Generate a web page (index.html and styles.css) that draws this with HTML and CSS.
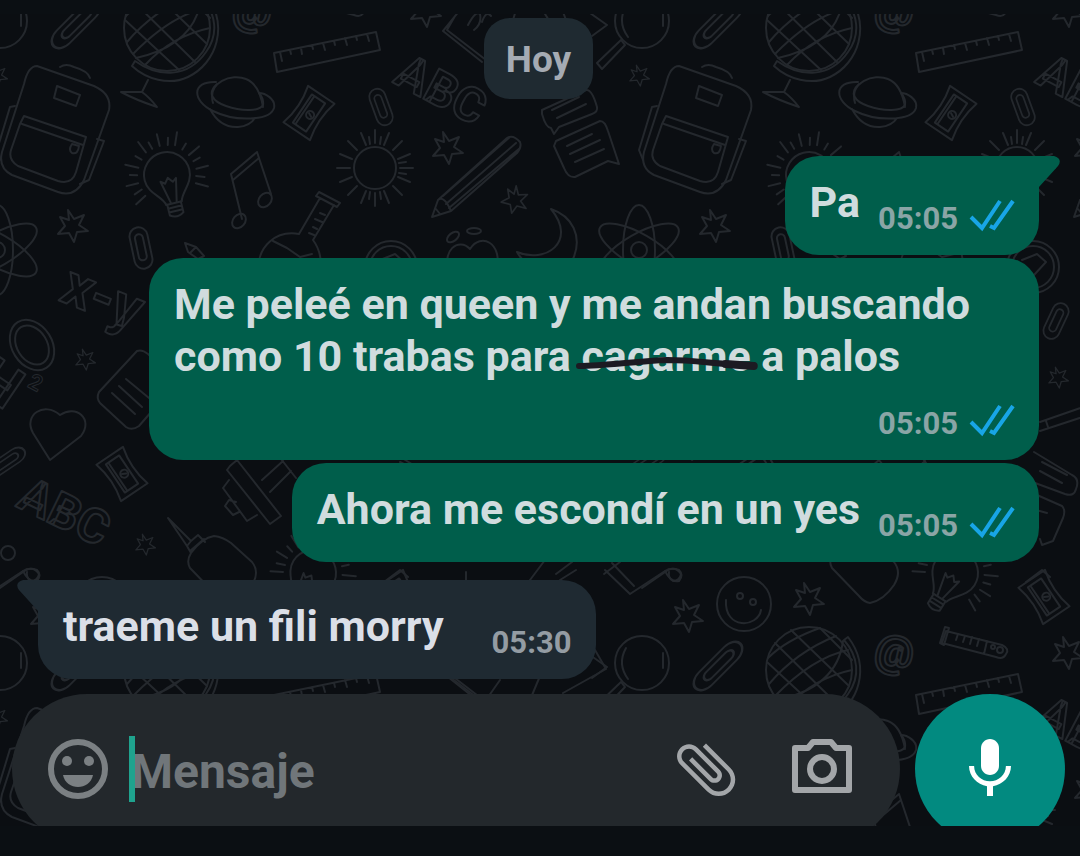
FILE: index.html
```html
<!DOCTYPE html>
<html lang="es">

<head>
    <meta charset="UTF-8">
    <meta name="viewport" content="width=device-width, initial-scale=1">
    <title>Chat</title>
    <link rel="stylesheet" href="styles.css">
</head>

<body>
    <div class="chat">
        <!-- wallpaper: one 642x642 tile, repeated -->
        <svg class="wallpaper" aria-hidden="true">
            <defs>
                <path id="star" d="M-4 -15 L2 -6 L12 -10 L7 0 L16 6 L5 7 L2 17 L-3 8 L-14 9 L-7 1 L-12 -8 L-3 -5z" />
                <g id="clip">
                    <path d="M-9 -12 A9 9 0 0 1 9 -12 V12 A9 9 0 0 1 -9 12z" />
                    <path d="M-4 8 V-10 A4 4 0 0 1 4 -10 V9 A4 4 0 0 1 -4 8" />
                </g>
                <g id="sharpener">
                    <path d="M-16 -22 H16 Q10 0 16 22 H-16 Q-10 0 -16 -22z" />
                    <path d="M-8 -17 H8 V17 H-8z M-5 -17 V17" />
                    <circle cx="2" cy="1" r="4" />
                    <path d="M0 0 L4 2" />
                </g>
                <g id="bulb">
                    <path d="M-8 29 C-9 20 -23 14 -23 0 A23 23 0 0 1 23 0 C23 14 10 20 8 29z" />
                    <path d="M-3 28 L-8 5 L-4 8 L0 3 L4 8 L8 5 L3 28 M-7 29 V40 Q0 45 7 40 V29 M-7 33 H7 M-7 37 H7" />
                    <path d="M0 -30 V-42 M8 -29 L10 -36 M15 -27 L20 -39 M21 -21 L26 -26 M26 -14 L38 -20 M29 -7 L36 -9 M30 1 H42 M28 8 L36 11 M26 15 L37 21 M-8 -29 L-10 -36 M-15 -27 L-20 -39 M-21 -21 L-26 -26 M-26 -14 L-38 -20 M-29 -7 L-36 -9 M-30 1 H-42 M-28 8 L-36 11 M-26 15 L-37 21" />
                </g>
                <g id="tile">
                    <!-- first rows -->
                    <g>
                        <circle cx="642" cy="21" r="27" />
                        <path d="M626 6 Q617 22 628 37 M663 11 V26 M621 40 L625 45 L602 69 L597 63z" />
                    </g>
                    <use href="#clip" transform="translate(76 24) rotate(45) scale(1 1.5)" />
                    <g>
                        <circle cx="167" cy="28" r="43" />
                        <path d="M206 -5 C229 25 217 63 188 77 C169 86 146 79 132 66 L135 61 C159 78 188 78 206 52 C219 34 216 14 202 -2z" />
                        <path d="M133 1 L195 62 M149 -12 L207 44 M178 -14 L210 18 M125 20 L179 70 M206 8 Q170 16 133 54 M194 -6 Q154 10 127 42 M178 -14 Q144 -2 126 16 M210 28 Q172 36 145 65 M201 -1 Q195 45 136 58" />
                        <path d="M148 80 L142 92 L121 92 Q136 100 157 107 Q149 97 142 92" />
                    </g>
                    <text class="at" x="233" y="24" transform="rotate(8 253 8)">@</text>
                    <g>
                        <path d="M304 -11 L360 3 Q368 7 364 12 Q361 18 354 15 L300 1z M307 -14 L302 3 L298 1 L303 -15z M345 -1 L342 12" />
                        <path d="M316 -8 L314 -2 M323 -6 L321 0 M330 -5 L328 2 M337 -3 L335 4" />
                        <circle cx="351" cy="5" r="2" />
                        <circle cx="358" cy="8" r="3" />
                    </g>
                    <path d="M274 53 L376 32 L380 50 L277 72z M280 52 L282 61 M290 50 L291 54 M301 48 L302 54 M312 45 L313 49 M323 43 L325 50 M334 41 L335 45 M345 38 L347 45 M356 36 L357 40 M367 34 L369 41" />
                    <use href="#star" transform="translate(639 75) scale(.65)" />
                    <use href="#star" transform="translate(425 10)" />
                    <path d="M460 10 L443 31 L482 62 M455 16 L447 30 L486 60 M468 25 Q476 10 480 14 Q482 24 474 30 M482 22 Q486 10 491 16 M516 10 L510 30 M590 13 L607 25 L592 36 M545 14 L550 22 M563 12 L566 20" />

                    <!-- backpack -->
                    <path d="M37 66 L94 86 Q112 94 109 110 L84 180 Q75 198 58 192 L12 175 Q-2 168 2 152 L24 84 Q28 66 37 66z" />
                    <path d="M24 116 L86 137 L76 172 Q72 185 58 181 L18 166 Q8 160 11 150 L20 124z M22 124 L83 145 M57 86 L80 95 L76 106 L54 98z M60 67 Q66 63 74 67 Q88 71 90 78 M72 144 L79 146 Q78 155 72 153 Q68 150 72 144z M15 106 L10 107 L-3 150 L1 160 M97 139 L104 141 L89 180 L80 184" />

                    <!-- saturn -->
                    <path d="M213 103 C207 82 232 73 246 79 C256 83 261 95 263 107" />
                    <path d="M216 82 C191 81 192 101 213 111 C235 122 270 121 274 108 C276 99 265 93 259 93 M217 84 C207 93 212 101 226 106 C243 112 260 111 263 105 Q264 99 259 93 M210 109 Q220 128 238 127 Q250 126 255 118" />

                    <use href="#sharpener" transform="translate(309 113) rotate(34)" />
                    <use href="#clip" transform="translate(381 107) rotate(-20) scale(.9)" />
                    <text class="abc" x="392" y="82" transform="rotate(28 392 82)">ABC</text>

                    <!-- speech bubbles -->
                    <path d="M542 110 L586 90 Q592 89 597 107 Q598 112 592 114 L559 127 L554 134 L551 128 Q546 128 542 114z M552 110 L579 97 M557 118 L586 104" />
                    <path d="M556 141 L600 121 Q605 121 608 131 L616 155 L619 164 L608 161 L575 177 Q568 178 564 168 L554 146z M567 146 L592 134 M570 154 L600 140 M575 162 L604 149" />

                    <use href="#bulb" transform="translate(167 175) rotate(-14)" />
                    <path d="M242 219 L231 174 L257 152 L271 194 M233 180 L259 158" />
                    <ellipse cx="239" cy="221" rx="8" ry="6" transform="rotate(-50 239 221)" />
                    <ellipse cx="265" cy="200" rx="8" ry="6" transform="rotate(-50 265 200)" />

                    <!-- sun -->
                    <circle cx="375" cy="168" r="21" />
                    <path d="M375 143 V130 M375 193 V206 M400 168 H413 M350 168 H337 M393 150 L402 141 M357 150 L348 141 M393 186 L402 195 M357 186 L348 195 M384 145 L389 133 M366 145 L361 133 M398 159 L410 154 M352 159 L340 154 M398 177 L410 182 M352 177 L340 182 M384 191 L389 203 M366 191 L361 203 M380 144 L381 137 M370 144 L369 137 M399 163 L406 162 M399 173 L406 174 M380 192 L381 199 M370 192 L369 199" />

                    <use href="#star" x="447" y="147" />
                    <use href="#star" transform="translate(515 199) rotate(20) scale(.85)" />
                    <path d="M432 217 L438 200 L507 138 Q513 134 520 142 Q522 147 517 153 L451 211z M438 200 Q444 195 451 211 M443 196 L510 137 M446 204 L516 143 M449 208 L520 148 M436 209 L440 214" />

                    <use href="#star" x="72" y="225" />
                    <use href="#clip" transform="translate(141 248) rotate(-12)" />

                    <!-- flask -->
                    <path d="M319 192 L340 203 L337 207 L316 196z M320 198 L299 234 C276 230 258 246 258 270 C262 300 315 305 321 270 Q322 252 313 240 L334 205 M273 241 L287 248 L300 257 L312 254 M325 215 L320 213 M322 222 L315 219 M317 229 L313 227 M314 235 L309 233" />
                    <path d="M185 243 L196 247 L204 256 L198 259 L188 252z M196 247 L190 253" />

                    <!-- rings, apple, moon -->
                    <circle cx="391" cy="267" r="26" />
                    <circle cx="391" cy="267" r="21" />
                    <path d="M380 260 L395 254 L404 262 L392 275" />
                    <path d="M450 275 C440 250 459 237 470 249 C481 232 502 243 497 268" />
                    <ellipse cx="453" cy="237" rx="7" ry="4" transform="rotate(-38 453 237)" />
                    <ellipse cx="474" cy="231" rx="7" ry="3" />
                    <path d="M551 209 C572 216 583 236 573 259 C564 278 530 276 517 252 C545 264 578 242 551 209z" />

                    <!-- atom -->
                    <ellipse cx="639" cy="250" rx="16" ry="45" />
                    <ellipse cx="639" cy="250" rx="16" ry="45" transform="rotate(60 639 250)" />
                    <ellipse cx="639" cy="250" rx="16" ry="45" transform="rotate(-60 639 250)" />
                    <circle cx="639" cy="250" r="8" />

                    <!-- formulas -->
                    <text class="formula" x="58" y="300" transform="rotate(22 58 300)">x-y</text>
                    <ellipse cx="32" cy="345" rx="20" ry="27" transform="rotate(-32 32 345)" />
                    <ellipse cx="32" cy="345" rx="15" ry="21" transform="rotate(-32 32 345)" />
                    <text class="formula" x="-24" y="399" transform="rotate(34 -8 386)">H</text>
                    <text class="small" x="27" y="388" transform="rotate(28 30 386)">2</text>
                    <use href="#star" transform="translate(85 359) scale(.65)" />
                    <path d="M137 351 Q142 349 148 354 L177 382 L139 426 Q132 431 126 427 L100 403 Q96 398 99 392z M126 379 L149 398 M119 386 L142 407 M112 393 L135 414" />
                    <path d="M50 460 L33 433 C23 415 44 401 60 415 C76 404 94 419 81 436z" />
                    <use href="#clip" transform="translate(5 463) rotate(56) scale(.8 1.1)" />
                    <use href="#sharpener" transform="translate(122 474) rotate(-34)" />
                    <text class="abc" x="15" y="506" transform="rotate(26 15 506)">ABC</text>
                    <use href="#star" transform="translate(145 544) scale(.65)" />

                    <!-- right of the bubbles -->
                    <use href="#clip" transform="translate(414 321) rotate(25) scale(.9)" />
                    <use href="#star" transform="translate(416 377) scale(.65)" />
                    <path d="M398 422 L450 404 M398 431 L450 414 M404 421 L406 427" />
                    <path d="M392 452 L430 475 Q438 479 434 489 Q432 497 423 494 L385 480 M400 462 L425 475 M398 471 L420 483 M395 495 L420 506 Q424 510 421 518 L411 541 L400 545 L398 539 M394 510 L405 513" />

                    <!-- dumbbell -->
                    <path d="M230 466 L237 460 L281 516 L270 524 L227 470z M229 480 L223 488 L247 521 L257 515 M236 502 L229 500 L225 506 L233 515 L239 512 M262 480 L283 461 M270 492 L291 471 M281 459 L296 478" />

                    <!-- glue -->
                    <path d="M168 518 L191 541 L187 546z M191 541 L198 535 L205 542 M187 546 L191 553 M190 551 L204 539 M191 553 Q202 538 214 536 Q223 537 231 543 L252 562 Q260 572 252 585 Q242 600 228 603 Q222 602 217 596 L190 568 Q186 561 191 553z" />

                    <use href="#bulb" transform="translate(313 573) rotate(32)" />
                    <path d="M605 570 L630 594 L665 571 M612 563 L634 586 M665 571 Q671 567 679 570 Q684 575 679 581 Q671 583 665 571 M604 574 L620 562" />
                    <use href="#star" x="45" y="615" />
                    <circle cx="102" cy="604" r="27" />
                    <circle cx="98" cy="596" r="3" />
                    <circle cx="111" cy="602" r="3" />
                    <path d="M84 600 C82 630 116 628 119 610" />
                    <use href="#star" x="166" y="598" />
                    <use href="#sharpener" transform="translate(402 597) rotate(-34)" />
                    <path d="M384 582 L400 570 L408 577 M466 582 V572 M530 580 L545 560 M556 574 L572 562 M560 580 L576 570 M595 650 L606 669 L563 693 M540 676 L530 700 M450 677 L480 700 M500 680 L486 700" />
                    <circle cx="8" cy="553" r="7" />
                    <path d="M0 588 L26 570 Q34 566 39 574 Q38 581 31 581 Q26 578 27 572" />
                </g>
            </defs>
            <g class="doodles">
                <use href="#tile" x="-642" y="-14" />
                <use href="#tile" x="0" y="-14" />
                <use href="#tile" x="642" y="-14" />
                <use href="#tile" x="1284" y="-14" />
                <use href="#tile" x="-642" y="628" />
                <use href="#tile" x="0" y="628" />
                <use href="#tile" x="642" y="628" />
                <use href="#tile" x="1284" y="628" />
            </g>
        </svg>

        <main class="messages">
            <div class="date">Hoy</div>

            <div class="msg out first">
                <svg class="tail" viewBox="0 0 42 34" aria-hidden="true"><path d="M0 0 H36 Q45 3 40 10 L21 31 V34 H0z" /></svg>
                <p>Pa</p>
                <div class="meta">
                    <time>05:05</time>
                    <svg class="ticks" viewBox="0 0 44 32" role="img" aria-label="Leído"><path d="M1 14 L12 25 L30 -2 M20 23 L24 25 L43 -2" /></svg>
                </div>
            </div>

            <div class="msg out long">
                <p>Me peleé en queen y me andan buscando como 10 trabas para <s>cagarme<svg viewBox="0 0 182 16" preserveAspectRatio="none" aria-hidden="true"><path d="M4 10 C30 10 62 5 92 4 C122 4 145 9 177 9" /><path class="end" d="M150 8 L178 10" /></svg></s> a palos</p>
                <div class="meta">
                    <time>05:05</time>
                    <svg class="ticks" viewBox="0 0 44 32" role="img" aria-label="Leído"><path d="M1 14 L12 25 L30 -2 M20 23 L24 25 L43 -2" /></svg>
                </div>
            </div>

            <div class="msg out">
                <p>Ahora me escondí en un yes</p>
                <div class="meta">
                    <time>05:05</time>
                    <svg class="ticks" viewBox="0 0 44 32" role="img" aria-label="Leído"><path d="M1 14 L12 25 L30 -2 M20 23 L24 25 L43 -2" /></svg>
                </div>
            </div>

            <div class="msg in first">
                <svg class="tail" viewBox="0 0 42 34" aria-hidden="true"><path d="M42 0 H6 Q-3 3 2 10 L21 31 V34 H42z" /></svg>
                <p>traeme un fili morry</p>
                <div class="meta">
                    <time>05:30</time>
                </div>
            </div>
        </main>

        <form class="composer">
            <div class="field">
                <button type="button" class="emoji" aria-label="Emojis">
                    <svg viewBox="0 0 60 60"><circle cx="30" cy="30" r="27" fill="none" stroke="currentColor" stroke-width="6" /><circle cx="19" cy="22" r="5" /><circle cx="41" cy="22" r="5" /><path d="M15 36 H45 C42 52 18 52 15 36z" /></svg>
                </button>
                <div class="entry">
                    <span class="caret"></span>
                    <input type="text" placeholder="Mensaje" aria-label="Mensaje">
                </div>
                <button type="button" aria-label="Adjuntar">
                    <svg class="attach" viewBox="0 0 24 24"><path d="M16.5 6v11.5c0 2.21-1.79 4-4 4s-4-1.79-4-4V5c0-1.38 1.12-2.5 2.5-2.5s2.5 1.12 2.5 2.5v10.5c0 .55-.45 1-1 1s-1-.45-1-1V6H10v9.5c0 1.38 1.12 2.5 2.5 2.5s2.5-1.12 2.5-2.5V5c0-2.21-1.79-4-4-4S7 2.79 7 5v12.5c0 3.04 2.46 5.5 5.5 5.5s5.5-2.46 5.5-5.5V6h-1.5z" /></svg>
                </button>
                <button type="button" aria-label="Cámara">
                    <svg viewBox="0 0 60 60"><g fill="none" stroke="currentColor" stroke-width="6" stroke-linejoin="round"><path d="M3 9 H16 L21 3 H39 L44 9 H57 V51 H3z" /><circle cx="30" cy="30" r="12" /></g></svg>
                </button>
            </div>
            <button type="button" class="mic" aria-label="Grabar audio">
                <svg viewBox="0 0 24 24"><path d="M12 14c1.66 0 3-1.34 3-3V5c0-1.66-1.34-3-3-3S9 3.34 9 5v6c0 1.66 1.34 3 3 3z" /><path d="M17.3 11c0 3-2.54 5.1-5.3 5.1S6.7 14 6.7 11H5c0 3.41 2.72 6.23 6 6.72V21h2v-3.28c3.28-.48 6-3.3 6-6.72h-1.7z" /></svg>
            </button>
        </form>
    </div>
</body>

</html>
```
FILE: styles.css
```css
* {
    box-sizing: border-box;
}

body {
    margin: 0;
    padding: 14px 0 30px;
    background: #0b0f13;
    font-family: Roboto, "Liberation Sans", sans-serif;
    font-weight: 700;
}

p {
    margin: 0;
}

button {
    padding: 0;
    border: 0;
    background: none;
    color: #a3a6a9;
    cursor: pointer;
}

svg {
    display: block;
}

.chat {
    position: relative;
    overflow: hidden;
    background: #0b0e12;
}

/* wallpaper */

.wallpaper {
    position: absolute;
    left: 0;
    top: 0;
    width: 100%;
    height: 100%;
}

.doodles {
    fill: none;
    stroke: #24282d;
    stroke-width: 2;
    stroke-linecap: round;
    stroke-linejoin: round;
}

.doodles text {
    font-family: "Open Sans", sans-serif;
    font-weight: 600;
}

.abc {
    font-size: 48px;
}

.at {
    font-size: 44px;
}

.formula {
    font-size: 58px;
}

.small {
    font-size: 22px;
    stroke-width: 1px;
}

/* messages */

.messages {
    position: relative;
    display: flex;
    flex-direction: column;
    align-items: flex-start;
    gap: 3px;
    padding: 4px 41px 15px 38px;
}

.date {
    align-self: center;
    margin-bottom: 54px;
    padding: 3px 22px 0;
    border-radius: 26px;
    background: #1f2a31;
    color: #a5abb3;
    font-size: 37px;
    line-height: 78px;
}

.msg {
    position: relative;
    display: flex;
    align-items: flex-end;
    gap: 18px;
    max-width: 890px;
    padding: 20px 25px;
    border-radius: 34px;
    font-size: 43px;
    line-height: 52px;
}

.msg p {
    position: relative;
    padding-bottom: 7px;
}

.out {
    align-self: flex-end;
    background: #005e4b;
    color: #d0dcde;
}

.in {
    gap: 48px;
    margin-top: 15px;
    background: #1f2a32;
    color: #dbdfe7;
}

.long {
    flex-direction: column;
    gap: 19px;
}

.out.first {
    border-top-right-radius: 0;
}

.in.first {
    border-top-left-radius: 0;
}

.tail {
    position: absolute;
    top: 0;
    width: 42px;
    height: 34px;
}

.out .tail {
    right: -21px;
    fill: #005e4b;
}

.in .tail {
    left: -21px;
    fill: #1f2a32;
}

.meta {
    display: flex;
    align-items: center;
    gap: 12px;
    color: #8aa5a6;
    font-size: 31px;
    line-height: 32px;
}

.in .meta {
    color: #949ca3;
}

.ticks {
    width: 44px;
    height: 32px;
    overflow: visible;
    fill: none;
    stroke: #18a5e6;
    stroke-width: 4;
}

s {
    position: relative;
    text-decoration: none;
}

s svg {
    position: absolute;
    left: -4%;
    top: 50%;
    width: 108%;
    height: 16px;
    overflow: visible;
    fill: none;
    stroke: #1c1a22;
    stroke-width: 6;
    stroke-linecap: round;
}

s .end {
    stroke-width: 8;
}

/* composer, cut by the bottom edge */

.composer {
    position: relative;
    display: flex;
    gap: 15px;
    height: 132px;
    padding: 0 15px 0 12px;
    overflow: hidden;
}

.field {
    display: flex;
    flex: 1;
    align-items: center;
    height: 150px;
    padding: 0 48px 0 36px;
    border-radius: 75px;
    background: #23282c;
}

.field svg {
    width: 60px;
    height: 60px;
    fill: currentColor;
}

.field .attach {
    width: 72px;
    height: 72px;
    transform: rotate(-45deg);
}

.field button + button {
    margin-left: 50px;
}

.field .emoji {
    color: #7b8083;
}

.entry {
    position: relative;
    flex: 1;
    margin-left: 21px;
}

.caret {
    position: absolute;
    left: 0;
    top: 0;
    width: 6px;
    height: 66px;
    background: #1fa38e;
}

input {
    display: block;
    width: 100%;
    height: 66px;
    padding: 4px 0 0 2px;
    border: 0;
    outline: 0;
    background: none;
    color: #dbdfe7;
    font: inherit;
    font-size: 48px;
}

input::placeholder {
    color: #70767a;
    opacity: 1;
}

.mic {
    width: 150px;
    height: 150px;
    border-radius: 50%;
    background: #028a80;
    color: #fff;
}

.mic svg {
    width: 72px;
    height: 72px;
    margin: 0 auto;
    fill: currentColor;
}
```
